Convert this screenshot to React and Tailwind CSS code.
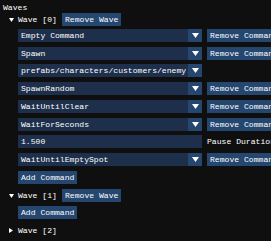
import React from 'react';

const font = { fontFamily: '"Liberation Mono", "DejaVu Sans Mono", monospace' };

const Btn = ({ children, className = '' }) => (
  <div className={`h-[13px] px-[3px] bg-[#24466f] flex items-center whitespace-nowrap shrink-0 ${className}`}>
    {children}
  </div>
);

const Combo = ({ value }) => (
  <div className="flex h-[13px] w-[184px] shrink-0 bg-[#1d2f4a]">
    <div className="flex-1 min-w-0 overflow-hidden whitespace-nowrap pl-[3px] flex items-center">{value}</div>
    <div className="w-[14px] bg-[#24466f] flex items-center justify-center">
      <svg width="7" height="5" viewBox="0 0 7 5"><path d="M0 0 H7 L3.5 5 Z" fill="#fff" /></svg>
    </div>
  </div>
);

const ComboRow = ({ value }) => (
  <div className="flex gap-[5px]">
    <Combo value={value} />
    <Btn className="w-[80px]">Remove Command</Btn>
  </div>
);

const Arrow = ({ open }) => (
  <div className="w-[9px] flex items-center">
    {open ? (
      <svg width="5" height="4" viewBox="0 0 5 4"><path d="M0 0 H5 L2.5 4 Z" fill="#fff" /></svg>
    ) : (
      <svg width="4" height="5" viewBox="0 0 4 5"><path d="M0 0 V5 L4 2.5 Z" fill="#fff" /></svg>
    )}
  </div>
);

const WaveHeader = ({ idx, open, remove }) => (
  <div className="flex items-center h-[13px] pl-[9px]">
    <Arrow open={open} />
    <span className="w-[44px] whitespace-nowrap">Wave [{idx}]</span>
    {remove && <Btn>Remove Wave</Btn>}
  </div>
);

export default function App() {
  return (
    <div className="w-[271px] h-[241px] overflow-hidden bg-[#0f0f0f] text-white text-[8.1px] leading-[13px]" style={font}>
      <div className="pt-[1px] pl-[3px] h-[13px] flex items-center">Waves</div>
      <div className="flex flex-col">
        <WaveHeader idx={0} open remove />
        <div className="pl-[18px] pt-[3px] flex flex-col gap-[5px]">
          <ComboRow value="Empty Command" />
          <div className="flex flex-col gap-[4px]">
            <ComboRow value="Spawn" />
            <Combo value="prefabs/characters/customers/enemy.prefab" />
          </div>
          <ComboRow value="SpawnRandom" />
          <ComboRow value="WaitUntilClear" />
          <div className="flex flex-col gap-[4px]">
            <ComboRow value="WaitForSeconds" />
            <div className="flex gap-[5px] items-center">
              <div className="h-[13px] w-[184px] shrink-0 bg-[#1d2f4a] pl-[3px] flex items-center">1.500</div>
              <span className="whitespace-nowrap">Pause Duration</span>
            </div>
          </div>
          <ComboRow value="WaitUntilEmptySpot" />
          <div className="flex"><Btn>Add Command</Btn></div>
        </div>
        <div className="pt-[5px]"><WaveHeader idx={1} open remove /></div>
        <div className="pl-[18px] pt-[4px] flex"><Btn>Add Command</Btn></div>
        <div className="pt-[5px]"><WaveHeader idx={2} /></div>
      </div>
    </div>
  );
}
